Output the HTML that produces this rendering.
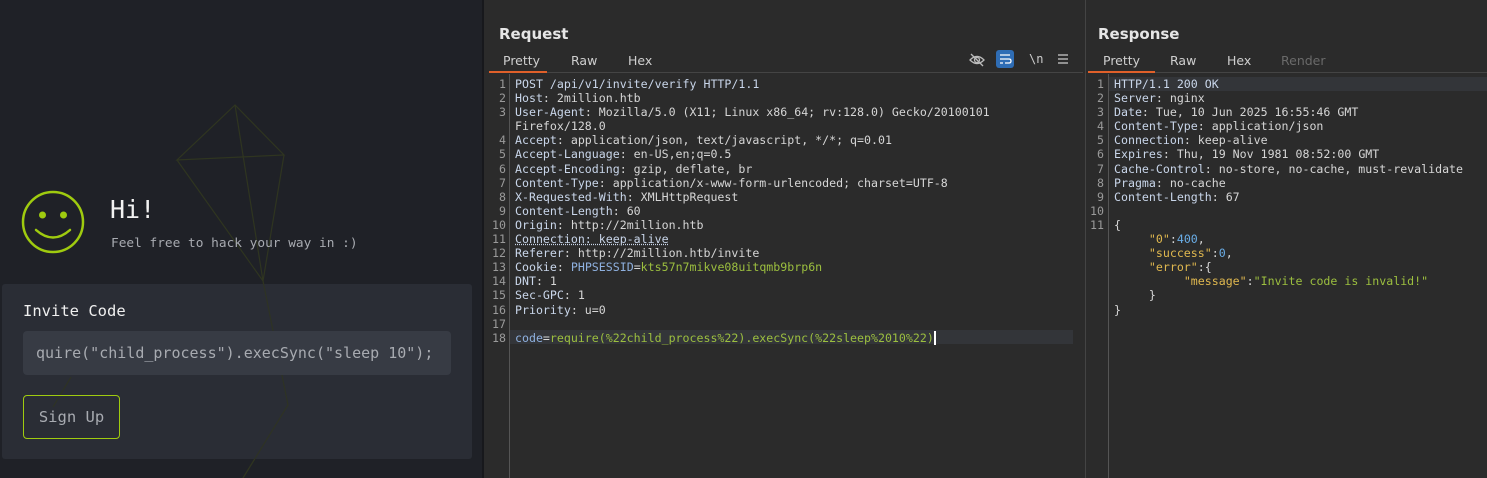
<!DOCTYPE html>
<html><head><meta charset="utf-8"><style>
*{margin:0;padding:0;box-sizing:border-box}
body{width:1487px;height:478px;overflow:hidden;background:#2b2b2b;position:relative;font-family:"DejaVu Sans Mono","Liberation Mono",monospace}
.left{position:absolute;left:0;top:0;width:484px;height:478px;background:#1f2127;border-right:2px solid #17181c}
.abs{position:absolute}
.mono{font-family:"DejaVu Sans Mono",monospace}
.ui{font-family:"DejaVu Sans","Liberation Sans",sans-serif}
.card{left:2px;top:284px;width:470px;height:175px;background:#2a2d35;border-radius:3px}
.inp{left:23px;top:331px;width:428px;height:44px;background:#373b44;border-radius:4px;color:#a8abb1;font-size:15px;line-height:44px;padding-left:14px;overflow:hidden;white-space:nowrap}
.btn{left:23px;top:395px;width:97px;height:44px;border:1.5px solid #9fcb0f;border-radius:4px;color:#a8abb1;font-size:15.5px;line-height:42px;text-align:center}
.code{font-size:11.6px;line-height:14.1px;color:#d6d6d6;white-space:pre}
.ln{color:#9a9a9a;text-align:right;white-space:pre;font-size:11.6px;line-height:14.1px}
.k{color:#c9d6ea}
.b{color:#8fb1e0}.g{color:#9cbf3f}.y{color:#e0b84f}.n{color:#6aaee8}
.title{color:#e6e6e6;font-size:15px;font-weight:bold}
.tab{font-size:12.5px;color:#cfcfcf}
</style></head><body>
<div class="left">
<svg class="abs" style="left:0;top:0" width="484" height="478"><g stroke="#2f3520" stroke-width="1.2" fill="none"><path d="M235 105L177 160L284 155Z M235 105L263 281 M284 155L263 281 M177 160L263 281 L288 405 L243 478"/><path d="M71 377L53 407"/></g></svg>
<svg class="abs" style="left:21px;top:190px" width="64" height="64"><circle cx="32" cy="32" r="30" fill="none" stroke="#9fcb0f" stroke-width="2.5"/><circle cx="21.5" cy="25" r="3.5" fill="#9fcb0f"/><circle cx="42.5" cy="25" r="3.5" fill="#9fcb0f"/><path d="M15 40Q32 55 49 40" fill="none" stroke="#9fcb0f" stroke-width="2.5" stroke-linecap="round"/></svg>
<div class="abs mono" style="left:110px;top:195px;font-size:25px;color:#f2f2f2">Hi!</div>
<div class="abs mono" style="left:111px;top:236px;font-size:12.8px;color:#a8abb1">Feel free to hack your way in :)</div>
<div class="abs card"></div>
<svg class="abs" style="left:0;top:280px" width="484" height="198"><path d="M263 1L288 125 L243 198 M71 97L53 127" stroke="#2f3520" stroke-width="1.2" fill="none" opacity=".8"/></svg>
<div class="abs mono" style="left:23px;top:302px;font-size:15.5px;color:#f0f0f0">Invite Code</div>
<div class="abs inp mono"><span style="margin-left:-1px">quire("child_process").execSync("sleep 10");</span></div>
<div class="abs btn mono">Sign Up</div>
</div>
<!-- request -->
<div class="abs ui title" style="left:499px;top:25px">Request</div>
<div class="abs ui tab" style="left:503px;top:53px">Pretty</div>
<div class="abs ui tab" style="left:571px;top:53px">Raw</div>
<div class="abs ui tab" style="left:628px;top:53px">Hex</div>
<div class="abs" style="left:489px;top:71px;width:58px;height:2px;background:#e0602a"></div>
<div class="abs" style="left:547px;top:72px;width:536px;height:1px;background:#444"></div>
<svg class="abs" style="left:968px;top:51px" width="18" height="18"><path d="M2 9Q9 2 16 9Q9 16 2 9Z" fill="none" stroke="#bbb" stroke-width="1.3"/><circle cx="9" cy="9" r="2.5" fill="none" stroke="#bbb" stroke-width="1.3"/><path d="M3 3L15 15" stroke="#bbb" stroke-width="1.3"/></svg>
<div class="abs" style="left:996px;top:50px;width:18px;height:18px;background:#2f6db5;border-radius:3px"></div>
<svg class="abs" style="left:996px;top:50px" width="18" height="18"><path d="M4 5H14M4 9H13Q15 9 15 11Q15 13 13 13H9M4 13H7" stroke="#fff" stroke-width="1.3" fill="none"/></svg>
<div class="abs mono" style="left:1029px;top:52px;font-size:12px;color:#ccc">\n</div>
<svg class="abs" style="left:1057px;top:53px" width="12" height="12"><path d="M1 2H11M1 6H11M1 10H11" stroke="#ccc" stroke-width="1.3"/></svg>
<div class="abs" style="left:509px;top:74px;width:1px;height:404px;background:#555"></div>
<div class="abs" style="left:510px;top:330px;width:563px;height:14px;background:#333539"></div>
<div class="abs ln" style="left:488px;top:77px;width:18px">1
2
3

4
5
6
7
8
9
10
11
12
13
14
15
16
17
18</div>
<div class="abs code" style="left:515px;top:77px"><span class="k">POST /api/v1/invite/verify HTTP/1.1</span>
<span class="k">Host</span>: 2million.htb
<span class="k">User-Agent</span>: Mozilla/5.0 (X11; Linux x86_64; rv:128.0) Gecko/20100101
Firefox/128.0
<span class="k">Accept</span>: application/json, text/javascript, */*; q=0.01
<span class="k">Accept-Language</span>: en-US,en;q=0.5
<span class="k">Accept-Encoding</span>: gzip, deflate, br
<span class="k">Content-Type</span>: application/x-www-form-urlencoded; charset=UTF-8
<span class="k">X-Requested-With</span>: XMLHttpRequest
<span class="k">Content-Length</span>: 60
<span class="k">Origin</span>: http://2million.htb
<span class="k" style="text-decoration:underline dotted">Connection: keep-alive</span>
<span class="k">Referer</span>: http://2million.htb/invite
<span class="k">Cookie</span>: <span class="b">PHPSESSID</span>=<span class="g">kts57n7mikve08uitqmb9brp6n</span>
<span class="k">DNT</span>: 1
<span class="k">Sec-GPC</span>: 1
<span class="k">Priority</span>: u=0

<span class="b">code</span>=<span class="g">require(%22child_process%22).execSync(%22sleep%2010%22)</span><span style="border-left:2px solid #fff"></span></div>
<!-- divider -->
<div class="abs" style="left:1085px;top:0;width:1px;height:478px;background:#444"></div>
<!-- response -->
<div class="abs ui title" style="left:1098px;top:25px">Response</div>
<div class="abs ui tab" style="left:1103px;top:53px">Pretty</div>
<div class="abs ui tab" style="left:1170px;top:53px">Raw</div>
<div class="abs ui tab" style="left:1227px;top:53px">Hex</div>
<div class="abs ui tab" style="left:1281px;top:53px;color:#6a6a6a">Render</div>
<div class="abs" style="left:1088px;top:71px;width:67px;height:2px;background:#e0602a"></div>
<div class="abs" style="left:1155px;top:72px;width:332px;height:1px;background:#444"></div>
<div class="abs" style="left:1108px;top:74px;width:1px;height:404px;background:#555"></div>
<div class="abs" style="left:1109px;top:77px;width:378px;height:14px;background:#333539"></div>
<div class="abs ln" style="left:1088px;top:77px;width:16px">1
2
3
4
5
6
7
8
9
10
11</div>
<div class="abs code" style="left:1114px;top:77px"><span class="k">HTTP/1.1 200 OK</span>
<span class="k">Server</span>: nginx
<span class="k">Date</span>: Tue, 10 Jun 2025 16:55:46 GMT
<span class="k">Content-Type</span>: application/json
<span class="k">Connection</span>: keep-alive
<span class="k">Expires</span>: Thu, 19 Nov 1981 08:52:00 GMT
<span class="k">Cache-Control</span>: no-store, no-cache, must-revalidate
<span class="k">Pragma</span>: no-cache
<span class="k">Content-Length</span>: 67

{
     <span class="y">"0"</span>:<span class="n">400</span>,
     <span class="y">"success"</span>:<span class="n">0</span>,
     <span class="y">"error"</span>:{
          <span class="y">"message"</span>:<span class="g">"Invite code is invalid!"</span>
     }
}</div>
</body></html>
